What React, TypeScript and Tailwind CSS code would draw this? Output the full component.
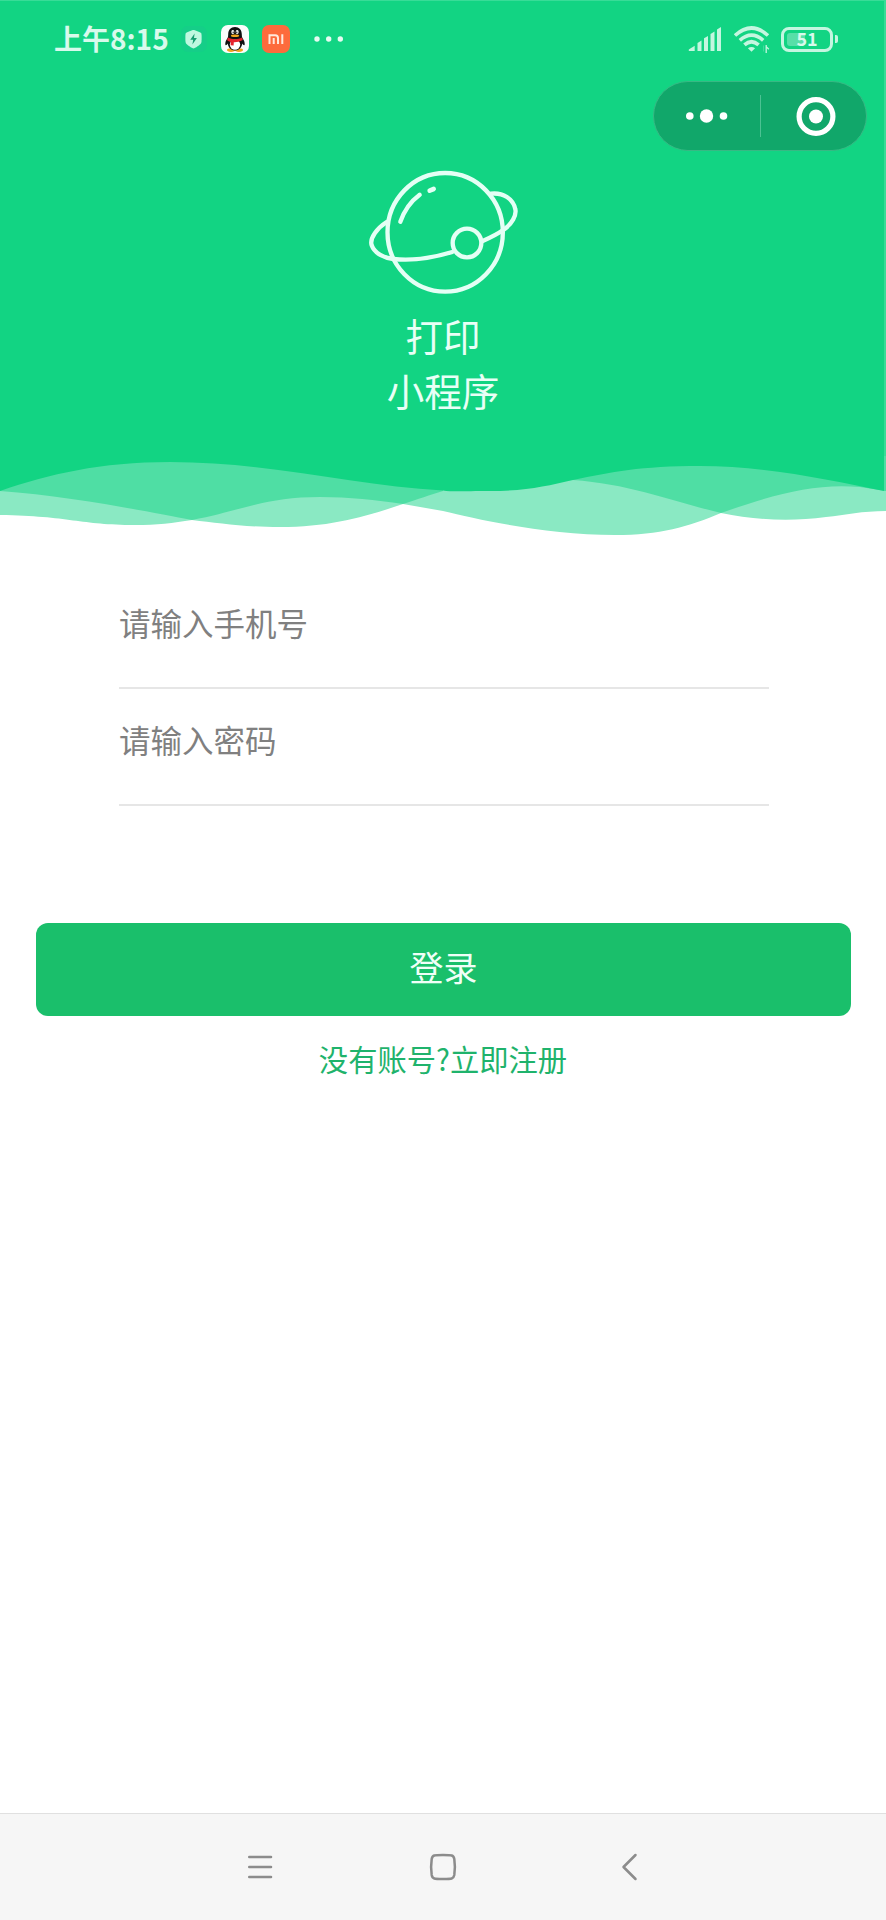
import { useState } from "react";

function StatusBar() {
  return (
    <div className="flex h-[76px] items-center pl-[54px] pr-[46px]">
      <span className="w-[112px] whitespace-nowrap pb-[3px] text-[28px] leading-[28px] font-bold text-[#d8faec]">
        上午8:15
      </span>
      <ShieldIcon />
      <QQIcon />
      <MiIcon />
      <svg className="ml-6 h-[6px] w-[30px]" viewBox="0 0 30 6" fill="#e6fbf2">
        <circle cx="3" cy="3" r="2.7" />
        <circle cx="14.7" cy="3" r="2.7" />
        <circle cx="26.3" cy="3" r="2.7" />
      </svg>
      <div className="ml-auto flex items-center">
        <SignalIcon />
        <WifiIcon />
        <Battery level={51} />
      </div>
    </div>
  );
}

function ShieldIcon() {
  return (
    <svg className="ml-[15px] size-[26px]" viewBox="0 0 26 26">
      <rect width="26" height="26" rx="7" fill="#15ce88" />
      <path
        d="M12.500 4C13.200 4 19.500 6.200 20.200 7C20.800 8 20.800 15.500 20.200 17C19.500 18.700 13.800 22.400 12.500 22.400S5.500 18.700 4.800 17C4.200 15.500 4.200 8 4.800 7C5.500 6.200 11.800 4 12.500 4Z"
        fill="#bff8e0"
      />
      <path d="M13.600 7.600l-4.300 6.200h2.900l-.8 4.600 4.500-6.400h-2.900z" fill="#159c70" />
    </svg>
  );
}

function QQIcon() {
  return (
    <svg className="ml-[14px] size-[28px]" viewBox="0 0 28 28">
      <rect width="28" height="28" rx="7" fill="#fbfdfc" />
      <ellipse cx="10" cy="25.100" rx="4" ry="1.800" fill="#f2a51e" />
      <ellipse cx="18" cy="25.100" rx="4" ry="1.800" fill="#f2a51e" />
      <path
        d="M14 2c-4.200 0-6.800 3-6.800 7.200 0 1.300-.1 2.600-.5 3.500-1.500 2.100-2.700 4.600-2.400 6.900.2 1.200 1.600.5 2.400-1 .6 4 3.200 6.900 7.300 6.900s6.700-2.900 7.300-6.900c.8 1.500 2.200 2.200 2.400 1 .3-2.300-.9-4.800-2.400-6.900-.4-.9-.5-2.200-.5-3.500C20.800 5 18.200 2 14 2z"
        fill="#111"
      />
      <ellipse cx="14" cy="19.600" rx="5.200" ry="5.200" fill="#fff" />
      <ellipse cx="11.800" cy="7" rx="1.500" ry="2.100" fill="#fff" />
      <ellipse cx="16.200" cy="7" rx="1.500" ry="2.100" fill="#fff" />
      <circle cx="12.200" cy="7.300" r=".7" fill="#111" />
      <circle cx="15.800" cy="7.300" r=".7" fill="#111" />
      <ellipse cx="14" cy="10.700" rx="4.200" ry="1.300" fill="#f2a51e" />
      <path
        d="M7 12.600c4 2.300 10 2.300 14 0l.8 2.500c-3 1.700-6.200 2.300-9 2.200l-.2 3.200-3-.3.2-3.300c-1.500-.3-2.700-.8-3.700-1.600z"
        fill="#e5232d"
      />
    </svg>
  );
}

function MiIcon() {
  return (
    <svg className="ml-[13px] size-[28px]" viewBox="0 0 28 28">
      <rect width="28" height="28" rx="7" fill="#fd6b3c" />
      <g fill="none" stroke="#ffe9dc" strokeWidth="2">
        <path d="M7.500 19V10.200h5.700q2.800 0 2.800 2.800V19" />
        <path d="M11.700 13v6M20.300 9.200V19" />
      </g>
    </svg>
  );
}

function SignalIcon() {
  return (
    <svg className="h-[25px] w-[34px]" viewBox="0 0 34 25" fill="#c4f6e0">
      <path d="M.8 24v-1.500l5.900-3.700V24z" />
      <path d="M9.500 24v-8l4-2.600V24z" />
      <path d="M16 24V11.200l4-2.300V24z" />
      <path d="M22.500 24V7l4-2.400V24z" />
      <path d="M29 24V2.500L33 0v24z" />
    </svg>
  );
}

function WifiIcon() {
  return (
    <svg className="ml-3 h-[28px] w-[36px]" viewBox="0 0 36 28">
      <g fill="none" stroke="#c4f6e0" strokeWidth="3.600">
        <path d="M1 10.500Q17.500-4.500 34 10.500" />
        <path d="M5.800 15.300Q17.500 5 29.200 15.300" />
        <path d="M10.400 19.900Q17.500 13.600 24.600 19.900" />
      </g>
      <path d="M13.900 23.200q3.600-2.600 7.200 0l-3.600 3.600z" fill="#c4f6e0" />
      <path d="M32.200 20v8M32.200 21.600l2.600 2.600" stroke="#c4f6e0" strokeWidth="1.300" />
      <path d="M29.500 20.500v6" stroke="#3fdb9c" strokeWidth="1" />
    </svg>
  );
}

function Battery({ level }: { level: number }) {
  return (
    <div className="ml-[11px] flex items-center gap-[2px]">
      <div className="relative flex h-[25px] w-[52px] items-center justify-center rounded-[8px] border-[3px] border-[#c4f6e0]">
        <div className="absolute left-[3px] top-[3px] h-[13px] w-[18px] rounded-[3px] bg-[#58dfa8]" />
        <span className="relative -mt-[2px] text-[18px] leading-[18px] font-bold text-[#d8faec]">
          {level}
        </span>
      </div>
      <div className="h-[8px] w-[3px] rounded-r-[2px] bg-[#c4f6e0]" />
    </div>
  );
}

function Capsule() {
  return (
    <div className="ml-auto mr-[17px] mt-[4px] flex h-[70px] w-[214px] items-center rounded-full border border-[#37b984] bg-[#11a76a]">
      <button className="flex w-[106px] justify-center">
        <svg className="h-[14px] w-[42px]" viewBox="0 0 42 14" fill="#fff">
          <circle cx="3.800" cy="7" r="3.800" />
          <circle cx="20.500" cy="7" r="6.700" />
          <circle cx="37.500" cy="7" r="3.800" />
        </svg>
      </button>
      <div className="h-[42px] w-px bg-[#4cc293]" />
      <button className="flex flex-1 justify-center pl-[4px]">
        <svg className="size-[40px]" viewBox="0 0 40 40">
          <circle cx="20" cy="20.500" r="16.900" fill="none" stroke="#fff" strokeWidth="5.200" />
          <circle cx="20" cy="20.500" r="7" fill="#fff" />
        </svg>
      </button>
    </div>
  );
}

function PlanetLogo() {
  return (
    <svg
      className="ml-[4px] h-[160px] w-[190px]"
      viewBox="0 0 570 480"
      fill="none"
      stroke="#e4fff5"
      strokeWidth="13"
      strokeLinecap="round"
    >
      <ellipse cx="285.500" cy="247" rx="173" ry="178" />
      <circle cx="351" cy="279" r="43" />
      <path d="M110 216C82 234 58 264 65 286C74 311 103 324 130 327C190 334 247 324 307 306" />
      <path d="M398 273C424 262 446 250 463 238C486 220 500 196 496 178C490 146 459 127 423 131" />
      <path d="M151 215C163 181 182 154 209 134" />
      <path d="M239 122L251 117" strokeWidth="14" />
    </svg>
  );
}

function Waves() {
  return (
    <svg className="block h-[80px] w-full" viewBox="0 456 886 80">
      <path
        d="M0 456H886V511C862 511 846 515 826 517C790 522 755 520 721 513C688 527 660 535 615 535C548 535 480 520 443 511L403 504C365 517 330 527 280 527C243 527 218 523 192 520C173 523 157 525 135 525C80 525 70 516 0 515Z"
        fill="#8ae9c3"
      />
      <path
        d="M0 491V456H443V491C430 495 418 499 403 504C375 500 350 497 320 497C265 497 240 511 192 520C150 512 70 496 0 491Z"
        fill="#4fdea4"
      />
      <path
        d="M573 480V456H886V491L860 487C815 483 775 494 721 513C675 502 630 484 573 480Z"
        fill="#4fdea4"
      />
      <path
        d="M0 456H884V491C830 480 765 466 700 466C640 466 612 472 573 480C547 486 526 491 490 491C464 491 453 492 443 490.500C355 486 270 462 170 462C100 462 50 474 0 491Z"
        fill="#12d483"
      />
      <path d="M885 456V491" stroke="#4fdea4" strokeWidth="2" />
    </svg>
  );
}

function Field({
  type,
  placeholder,
  value,
  onChange,
}: {
  type: string;
  placeholder: string;
  value: string;
  onChange: (value: string) => void;
}) {
  return (
    <div className="h-[117px] border-b-2 border-[#e6e6e6]">
      <input
        type={type}
        placeholder={placeholder}
        value={value}
        onChange={(e) => onChange(e.target.value)}
        className="mt-[24px] h-[52px] w-full text-[31.500px] outline-none placeholder:text-[#808080]"
      />
    </div>
  );
}

function NavBar() {
  return (
    <nav className="flex h-[107px] items-center border-t border-[#e0e0e0] bg-[#f6f6f6] pl-[247px]">
      <svg
        className="h-[28px] w-[26px]"
        viewBox="0 0 26 28"
        stroke="#8c8c8c"
        strokeWidth="2.600"
        strokeLinecap="round"
      >
        <path d="M2.300 4H24M2.300 14H24M2.300 24H24" />
      </svg>
      <svg className="ml-[156px] size-[28px]" viewBox="0 0 28 28" fill="none">
        <path
          d="M14 2C23 2 24.500 2 25.300 6Q26.500 14 25.300 22C24.500 26 23 26 14 26S3.500 26 2.700 22Q1.500 14 2.700 6C3.500 2 5 2 14 2Z"
          stroke="#8c8c8c"
          strokeWidth="2.500"
        />
      </svg>
      <svg className="ml-[163px] h-[28px] w-[18px]" viewBox="0 0 18 28" fill="none">
        <path
          d="M15.500 2L3.500 14L15.500 26"
          stroke="#8c8c8c"
          strokeWidth="2.500"
          strokeLinecap="round"
          strokeLinejoin="round"
        />
      </svg>
    </nav>
  );
}

export default function App() {
  const [phone, setPhone] = useState("");
  const [password, setPassword] = useState("");

  return (
    <div className="flex h-[1920px] w-[886px] flex-col overflow-hidden bg-white font-['Noto_Sans_CJK_SC',sans-serif]">
      <header className="h-[456px] border-r-2 border-t border-[#38dc97] bg-[#12d483]">
        <StatusBar />
        <Capsule />
        <div className="-mt-px ml-[2px] flex flex-col items-center">
          <PlanetLogo />
          <h1 className="-mt-[3px] text-center text-[37.500px] leading-[55px] text-[#e8fff6]">
            打印
            <br />
            小程序
          </h1>
        </div>
      </header>
      <Waves />
      <form className="flex flex-1 flex-col" onSubmit={(e) => e.preventDefault()}>
        <div className="ml-[119px] mt-[36px] w-[650px]">
          <Field type="text" placeholder="请输入手机号" value={phone} onChange={setPhone} />
          <Field type="password" placeholder="请输入密码" value={password} onChange={setPassword} />
        </div>
        <button
          type="submit"
          className="ml-[36px] mt-[117px] h-[93px] w-[815px] rounded-[12px] bg-[#1abf6b] pb-[6px] text-[34px] leading-[34px] text-[#f0fff7]"
        >
          登录
        </button>
        <a href="#" className="mt-[20px] text-center text-[29.300px] leading-[44px] text-[#1fb36c]">
          没有账号?立即注册
        </a>
      </form>
      <NavBar />
    </div>
  );
}
